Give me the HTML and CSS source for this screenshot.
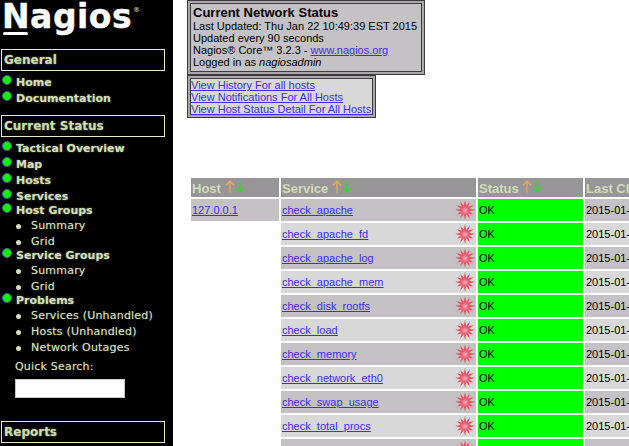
FILE: index.html
```html
<!DOCTYPE html>
<html lang="en">
<head>
<meta charset="utf-8">
<title>Nagios Current Network Status</title>
<link rel="stylesheet" href="styles.css">
</head>
<body>
<nav class="side">
  <div class="logo"><span class="logo-text">Nagios</span><span class="logo-reg">®</span></div>
  <div class="sec">General</div>
  <ul class="nav nav-general">
    <li class="item"><i class="dot"></i>Home</li>
    <li class="item"><i class="dot"></i>Documentation</li>
  </ul>
  <div class="sec">Current Status</div>
  <ul class="nav nav-status">
    <li class="item"><i class="dot"></i>Tactical Overview</li>
    <li class="item"><i class="dot"></i>Map</li>
    <li class="item"><i class="dot"></i>Hosts</li>
    <li class="item"><i class="dot"></i>Services</li>
    <li class="item tight"><i class="dot"></i>Host Groups</li>
    <li class="sub">Summary</li>
    <li class="sub">Grid</li>
    <li class="item tight"><i class="dot"></i>Service Groups</li>
    <li class="sub">Summary</li>
    <li class="sub">Grid</li>
    <li class="item tight"><i class="dot"></i>Problems</li>
    <li class="sub">Services (Unhandled)</li>
    <li class="sub">Hosts (Unhandled)</li>
    <li class="sub">Network Outages</li>
  </ul>
  <div class="search-label">Quick Search:</div>
  <div class="search-box"></div>
  <div class="sec sec-reports">Reports</div>
</nav>
<main class="main">
  <div class="info">
    <div class="info-title">Current Network Status</div>
    <div>Last Updated: Thu Jan 22 10:49:39 EST 2015</div>
    <div>Updated every 90 seconds</div>
    <div>Nagios® Core™ 3.2.3 - <a href="#">www.nagios.org</a></div>
    <div>Logged in as <em>nagiosadmin</em></div>
  </div>
  <div class="links">
    <a href="#">View History For all hosts</a>
    <a href="#">View Notifications For All Hosts</a>
    <a href="#">View Host Status Detail For All Hosts</a>
  </div>
  <svg class="defs" width="0" height="0" aria-hidden="true">
    <defs>
      <radialGradient id="burst" cx="50%" cy="52%" r="50%">
        <stop offset="0" stop-color="#f8b0ba"/>
        <stop offset="0.4" stop-color="#ef5a6e"/>
        <stop offset="1" stop-color="#e6304e"/>
      </radialGradient>
      <symbol id="star" viewBox="0 0 20 20">
        <path fill="url(#burst)" d="M10 .2 11.16 5.65 14.75 1.77 13.18 6.82 18.49 5.1 14.35 8.84 20 10 14.35 11.16 18.23 14.75 13.18 13.18 14.9 18.49 11.16 14.35 10 19.8 8.84 14.35 5.1 18.49 6.82 13.18 1.77 14.75 5.65 11.16 .2 10 5.65 8.84 1.51 5.1 6.82 6.82 5.25 1.77 8.84 5.65Z"/>
      </symbol>
      <symbol id="sort" viewBox="0 0 21 13">
        <path fill="none" stroke="#f2b04a" stroke-width="1.1" d="M5 12.5V1M0.8 5.5 5 1 9.2 5.5"/>
        <path fill="none" stroke="#1fe21f" stroke-width="1.1" d="M15 0.5V12M10.8 7.5 15 12 19.2 7.5"/>
      </symbol>
    </defs>
  </svg>
  <div class="table">
    <div class="head">Host <svg class="sort"><use href="#sort"/></svg></div>
    <div class="head">Service <svg class="sort"><use href="#sort"/></svg></div>
    <div class="head">Status <svg class="sort"><use href="#sort"/></svg></div>
    <div class="head">Last Check</div>

    <div class="cell odd"><a href="#">127.0.0.1</a></div>
    <div class="cell odd"><a href="#">check_apache</a><svg class="star"><use href="#star"/></svg></div>
    <div class="cell ok">OK</div>
    <div class="cell odd">2015-01-22 10:47:12</div>

    <div></div>
    <div class="cell even"><a href="#">check_apache_fd</a><svg class="star"><use href="#star"/></svg></div>
    <div class="cell ok">OK</div>
    <div class="cell even">2015-01-22 10:47:49</div>

    <div></div>
    <div class="cell odd"><a href="#">check_apache_log</a><svg class="star"><use href="#star"/></svg></div>
    <div class="cell ok">OK</div>
    <div class="cell odd">2015-01-22 10:48:26</div>

    <div></div>
    <div class="cell even"><a href="#">check_apache_mem</a><svg class="star"><use href="#star"/></svg></div>
    <div class="cell ok">OK</div>
    <div class="cell even">2015-01-22 10:49:03</div>

    <div></div>
    <div class="cell odd"><a href="#">check_disk_rootfs</a><svg class="star"><use href="#star"/></svg></div>
    <div class="cell ok">OK</div>
    <div class="cell odd">2015-01-22 10:45:21</div>

    <div></div>
    <div class="cell even"><a href="#">check_load</a><svg class="star"><use href="#star"/></svg></div>
    <div class="cell ok">OK</div>
    <div class="cell even">2015-01-22 10:45:58</div>

    <div></div>
    <div class="cell odd"><a href="#">check_memory</a><svg class="star"><use href="#star"/></svg></div>
    <div class="cell ok">OK</div>
    <div class="cell odd">2015-01-22 10:46:35</div>

    <div></div>
    <div class="cell even"><a href="#">check_network_eth0</a><svg class="star"><use href="#star"/></svg></div>
    <div class="cell ok">OK</div>
    <div class="cell even">2015-01-22 10:47:12</div>

    <div></div>
    <div class="cell odd"><a href="#">check_swap_usage</a><svg class="star"><use href="#star"/></svg></div>
    <div class="cell ok">OK</div>
    <div class="cell odd">2015-01-22 10:47:49</div>

    <div></div>
    <div class="cell even"><a href="#">check_total_procs</a><svg class="star"><use href="#star"/></svg></div>
    <div class="cell ok">OK</div>
    <div class="cell even">2015-01-22 10:48:26</div>

    <div></div>
    <div class="cell odd"><svg class="star"><use href="#star"/></svg></div>
    <div class="cell ok"></div>
    <div class="cell odd"></div>
  </div>
</main>
</body>
</html>
```
FILE: styles.css
```css
* { box-sizing: border-box; }
html, body { margin: 0; height: 100%; overflow: hidden; background: #fff; }
body { display: flex; width: 629px; height: 446px; font-family: "Liberation Sans", Arial, sans-serif; }

.side {
  flex: 0 0 173px;
  height: 446px;
  background: #000;
  color: #d3dfbe;
  font-family: "DejaVu Sans", Verdana, sans-serif;
  font-size: 11px;
  overflow: hidden;
}
.logo { height: 49px; padding-left: 2px; color: #fff; position: relative; }
.logo-text {
  display: block;
  font-family: "DejaVu Sans", sans-serif;
  font-weight: 700;
  font-size: 33px;
  line-height: 34px;
  letter-spacing: 0.5px;
  -webkit-text-stroke: 0.4px #fff;
}
.logo-text::after {
  content: "";
  position: absolute;
  left: 3px;
  top: 32px;
  width: 25px;
  height: 3px;
  background: #fff;
  border-radius: 2px;
}
.logo-reg { position: absolute; left: 133px; top: 5px; font-size: 7px; line-height: 10px; font-weight: 700; color: #bbb; }

.sec {
  width: 164px;
  height: 22px;
  margin-left: 1px;
  padding-left: 2px;
  border: 1px solid #e3ecc8;
  font-size: 12px;
  font-weight: 700;
  line-height: 20px;
  color: #ccdcb4;
  text-shadow: 0 0 2px #7d8a5c;
}
.sec-reports { margin-top: 23px; }

.nav { list-style: none; margin: 0; padding: 0; }
.nav-general { padding-top: 3px; height: 44px; }
.nav-status { padding-top: 3px; }
.item {
  display: flex;
  align-items: center;
  height: 16px;
  font-weight: 700;
  font-size: 11px;
  text-shadow: 0 0 2px #7d8a5c;
}
.item.tight { height: 14px; margin-top: -1px; }
.dot {
  flex: none;
  width: 10px;
  height: 10px;
  margin: -4px 4px 0 2px;
  border: 1px solid #5a5f90;
  border-radius: 50%;
  background: #00f000;
}
.sub {
  position: relative;
  height: 16px;
  padding-left: 31px;
  font-size: 11px;
  line-height: 18px;
  letter-spacing: 0.2px;
  text-shadow: 0 0 1px #6f7a52;
}
.sub::before {
  content: "";
  position: absolute;
  left: 16px;
  top: 7px;
  width: 5px;
  height: 5px;
  border-radius: 50%;
  background: #d3dfbe;
}
.search-label { margin: 4px 0 0 15px; height: 20px; line-height: 16px; font-size: 11px; letter-spacing: 0.2px; text-shadow: 0 0 1px #6f7a52; }
.search-box { width: 110px; height: 19px; margin-left: 15px; background: #fff; border: 1px solid #c8c8c8; }

.main { flex: 1 1 auto; min-width: 0; padding-left: 14px; overflow: hidden; }
.main a { color: #3f2bff; }

.info {
  width: 238px;
  padding: 5px 5px 6px 5px;
  border: 1px solid #3c3c3c;
  background: #c4c2c4;
  box-shadow: inset 0 0 0 2px #a9a7a9, inset 0 0 0 3px #3c3c3c;
  font-size: 11px;
  line-height: 12px;
}
.info-title { font-size: 13px; font-weight: 700; line-height: 14px; }

.links {
  display: flex;
  flex-direction: column;
  width: 189px;
  padding: 3px 3px 2px 3px;
  border: 1px solid #3c3c3c;
  background: #d8d8d8;
  box-shadow: inset 0 0 0 2px #a9a7a9, inset 0 0 0 3px #3c3c3c;
  font-size: 11px;
  line-height: 12px;
}

.defs { position: absolute; }
.table {
  display: grid;
  grid-template-columns: 88px 195px 105px 120px;
  grid-template-rows: 19px;
  grid-auto-rows: 22px;
  gap: 2px;
  margin: 60px 0 0 4px;
  width: 600px;
}
.head {
  background: #979597;
  color: #d0deb8;
  font-weight: 700;
  font-size: 13px;
  line-height: 21px;
  padding-left: 1px;
  white-space: nowrap;
  overflow: hidden;
}
.sort { width: 21px; height: 13px; vertical-align: 0; }
.cell {
  display: flex;
  align-items: center;
  padding-left: 1px;
  font-size: 11px;
  white-space: nowrap;
  overflow: hidden;
}
.odd { background: #c4c2c4; }
.even { background: #d8d8d8; }
.ok { background: #00ff00; }
.star { width: 20px; height: 20px; flex: none; margin: 0 1px 0 auto; }
```
